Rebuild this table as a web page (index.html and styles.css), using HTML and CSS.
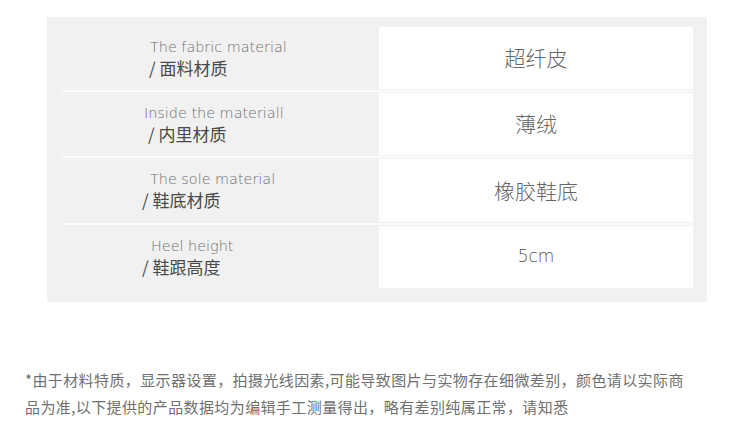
FILE: index.html
```html
<!DOCTYPE html>
<html lang="zh-CN">
<head>
<meta charset="utf-8">
<title>参数</title>
<link rel="stylesheet" href="styles.css">
</head>
<body>
<div class="spec">
  <div class="row">
    <div class="label"><span class="en">The fabric material</span><span class="zh">/ 面料材质</span></div>
    <div class="value">超纤皮</div>
  </div>
  <div class="sep"></div>
  <div class="row">
    <div class="label shift-a"><span class="en">Inside the materiall</span><span class="zh">/ 内里材质</span></div>
    <div class="value">薄绒</div>
  </div>
  <div class="sep"></div>
  <div class="row tall">
    <div class="label shift-b"><span class="en">The sole material</span><span class="zh">/ 鞋底材质</span></div>
    <div class="value">橡胶鞋底</div>
  </div>
  <div class="sep"></div>
  <div class="row">
    <div class="label shift-c"><span class="en">Heel height</span><span class="zh">/ 鞋跟高度</span></div>
    <div class="value latin">5cm</div>
  </div>
</div>
<p class="note">*由于材料特质，显示器设置，拍摄光线因素,可能导致图片与实物存在细微差别，颜色请以实际商<br>品为准,以下提供的产品数据均为编辑手工测量得出，略有差别纯属正常，请知悉</p>
</body>
</html>
```
FILE: styles.css
```css
html, body {
  margin: 0;
  padding: 0;
  background: #ffffff;
}
body {
  font-family: "Noto Sans CJK SC", "Noto Sans", sans-serif;
}
.spec {
  margin: 17px 0 0 47px;
  width: 660px;
  height: 285px;
  box-sizing: border-box;
  background: #f1f1f1;
  padding: 10px 14px 14px 0;
  display: flex;
  flex-direction: column;
}
.row {
  display: grid;
  grid-template-columns: 332px 314px;
  height: 62px;
}
.row.tall {
  height: 63px;
}
.sep {
  height: 4px;
  display: flex;
  align-items: center;
}
.sep::before {
  content: "";
  display: block;
  margin-left: 15px;
  flex: 1;
  height: 2px;
  background: #fafafa;
}
.label {
  display: flex;
  flex-direction: column;
  justify-content: center;
  padding: 0 0 2px 103px;
}
.en {
  font-family: "DejaVu Sans", "Noto Sans", sans-serif;
  font-weight: 200;
  font-size: 14.4px;
  line-height: 20px;
  color: #6e6e6e;
}
.zh {
  font-size: 17px;
  line-height: 21px;
  color: #4a4a4a;
  margin-left: -1px;
}
.shift-a .en { margin-left: -6px; }
.shift-a .zh { margin-left: -2px; }
.shift-b .zh { margin-left: -8px; }
.shift-b .en { margin-left: 0; }
.shift-c .en { margin-left: 1px; }
.shift-c .zh { margin-left: -8px; }
.value {
  background: #ffffff;
  display: flex;
  align-items: center;
  justify-content: center;
  font-size: 21px;
  font-weight: 300;
  color: #666666;
  padding-bottom: 2px;
}
.value.latin {
  font-family: "DejaVu Sans", "Noto Sans", sans-serif;
  font-size: 17px;
  font-weight: 200;
  color: #505050;
}
.note {
  margin: 64px 0 0 25px;
  font-size: 15px;
  line-height: 27px;
  letter-spacing: 0.4px;
  color: #707070;
}
```
